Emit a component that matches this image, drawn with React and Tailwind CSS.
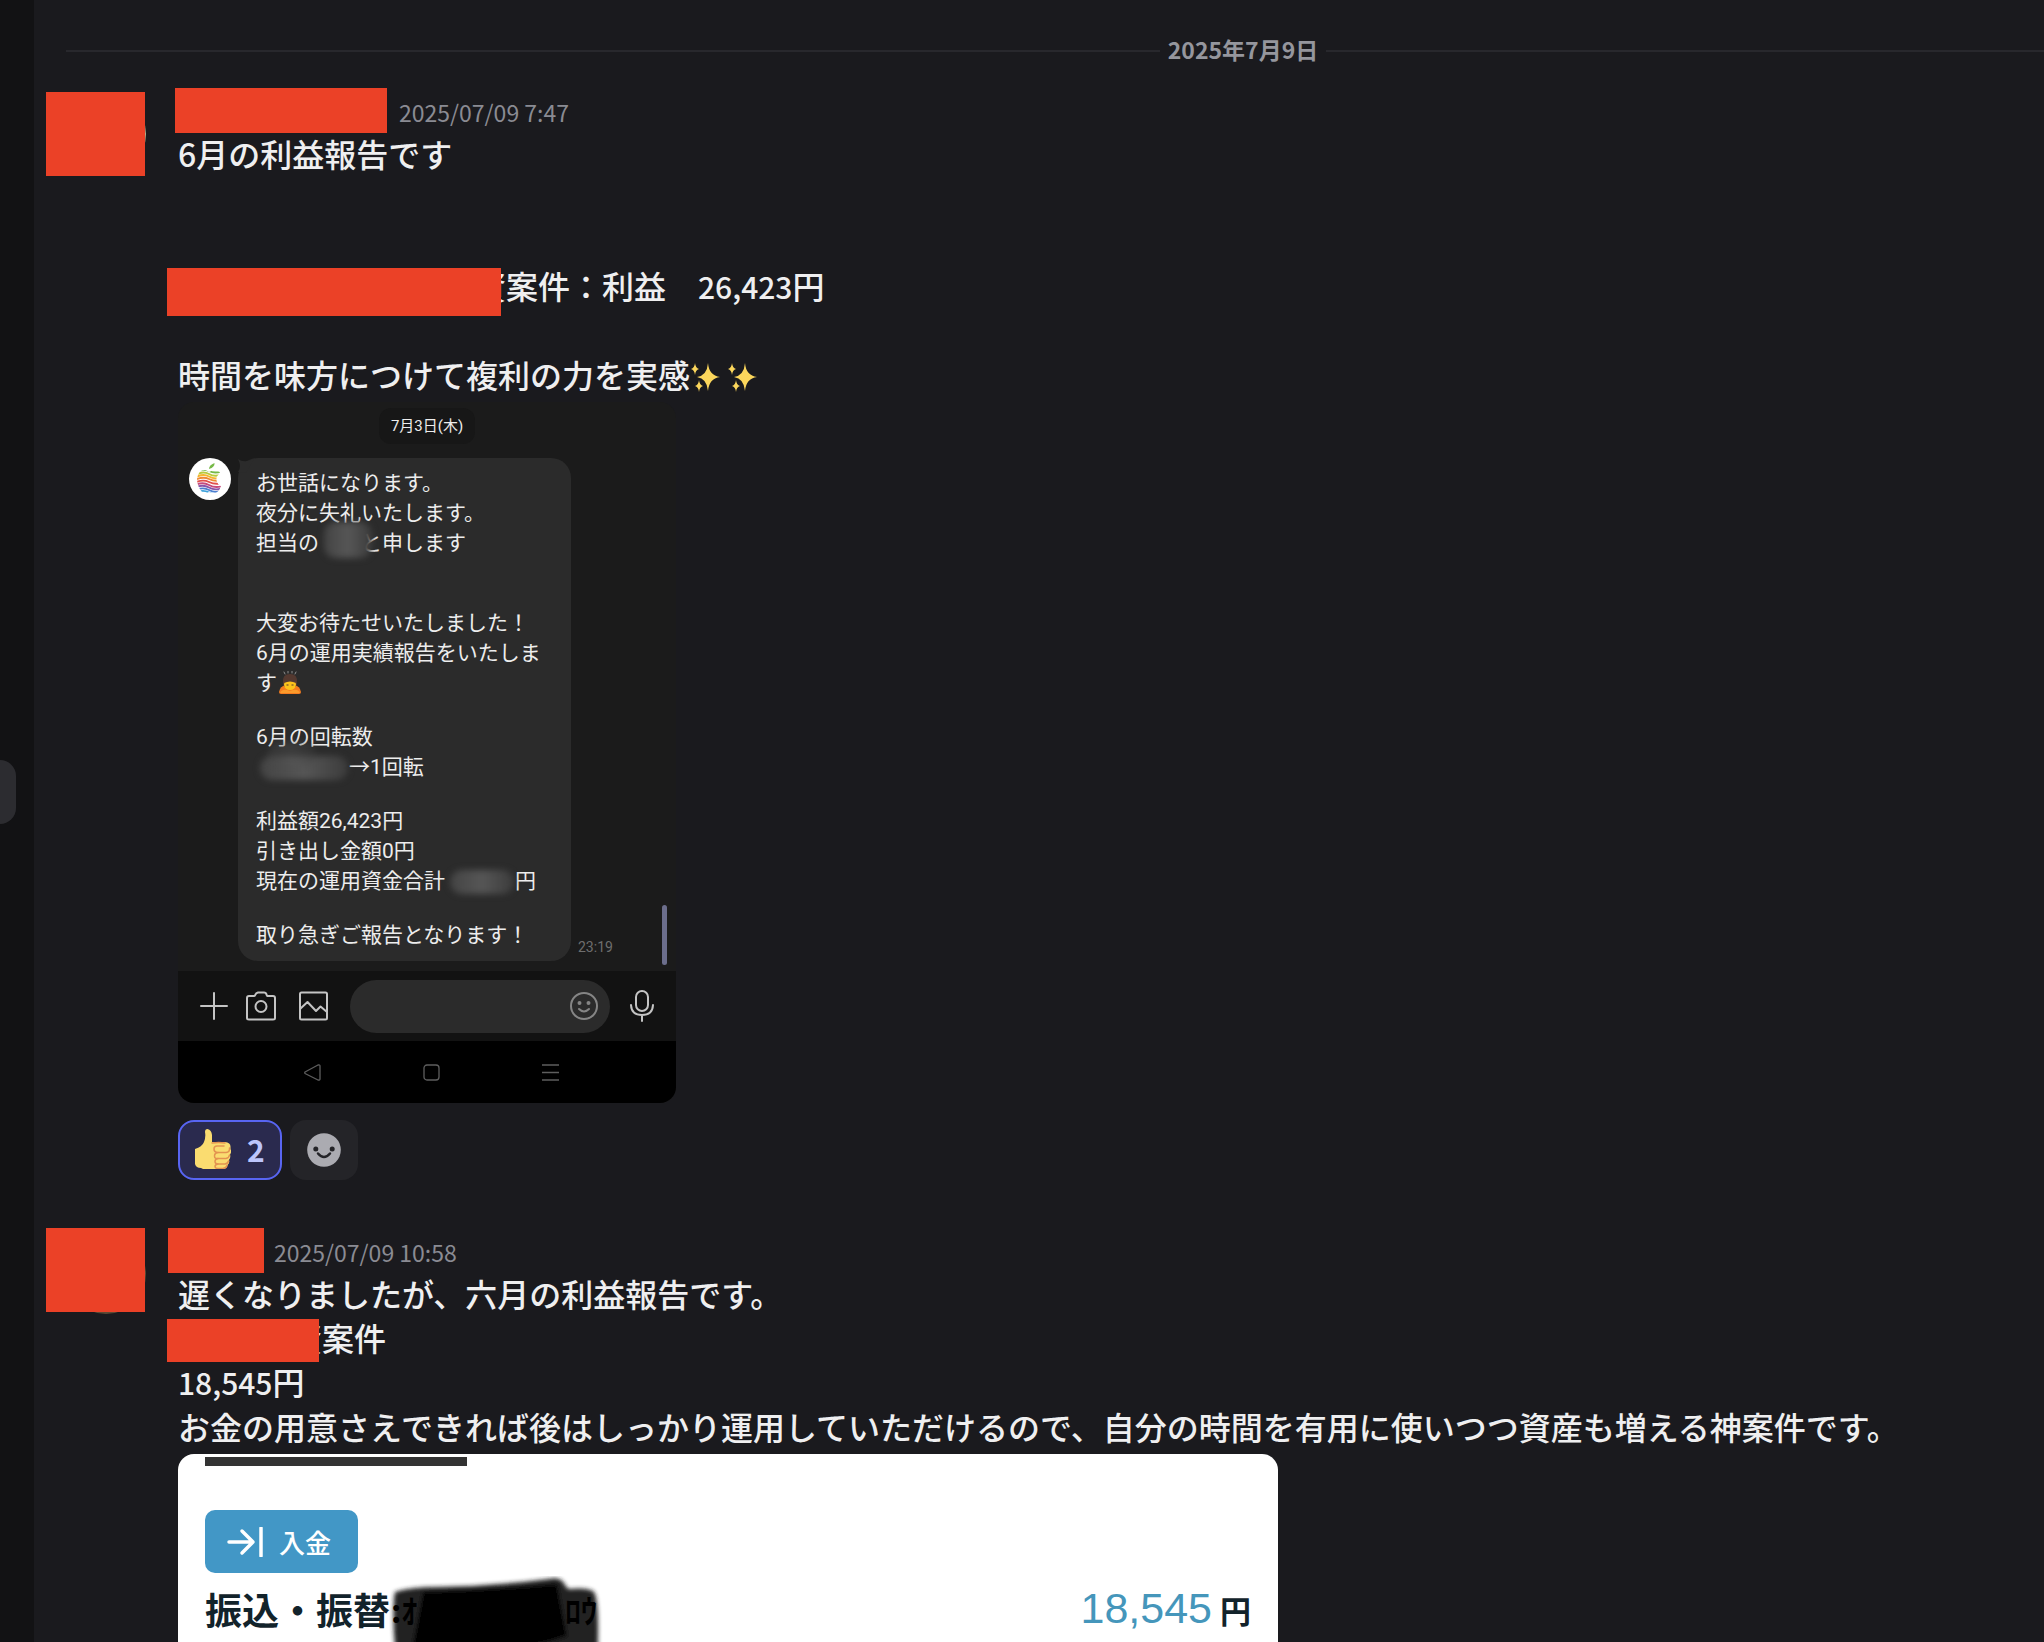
import { clsx } from "clsx";

// Solid block that hides a name or an avatar
function Redaction({ className }) {
  return <span aria-hidden="true" className={clsx("absolute bg-[#eb4127]", className)} />;
}

function Sparkles() {
  return (
    <svg width="30" height="32" viewBox="0 0 30 32" className="inline-block align-[-5px]">
      <g fill="#fbd65c">
        <path d="M18 2Q19 14.500 30 16Q19 17.500 18 30Q17 17.500 7 16Q17 14.500 18 2Z" />
        <path d="M5 2Q5.500 7 9 8Q5.500 9 5 14Q4.500 9 1 8Q4.500 7 5 2Z" />
        <path d="M9 19Q9.500 24 13 25Q9.500 26 9 31Q8.500 26 5 25Q8.500 24 9 19Z" />
      </g>
    </svg>
  );
}

function Bowing() {
  return (
    <svg width="22" height="24" viewBox="0 0 22 24" className="ml-0.5 inline-block align-[-5px]">
      <g stroke="#8d8d8d" strokeWidth="1" strokeLinecap="round">
        <path d="M5 1l1 2M9 0v2M13 0v2M17 1l-1 2" />
      </g>
      <path d="M0 21Q1 15 7 14h8q6 1 7 7 0 2-2 2H2q-2 0-2-2Z" fill="#f57c1f" />
      <path d="M4 12Q3 3 11 3t7 9q0 4-3 4H7q-3 0-3-4Z" fill="#543930" />
      <ellipse cx="11" cy="13.500" rx="6" ry="5.500" fill="#fcc21b" />
      <path d="M5 12Q11 9 17 12L16 7H6Z" fill="#543930" />
      <path d="M1 22q2-4 7-3l3 1 3-1q5-1 7 3Z" fill="#fb9b2b" />
      <path d="M7.500 14h2M12.500 14h2" stroke="#543930" strokeWidth="1.200" />
    </svg>
  );
}

function ThumbsUp() {
  return (
    <svg width="36" height="40" viewBox="0 0 36 40">
      <path
        d="M10 3Q10 0 12.500 0Q16.500 1 17 6V13H30Q35.500 13.500 35.500 17.500V20Q37 23 35 25.500Q36 28.500 34 31Q35 34 32.500 36Q32 40 28 40H8L6 39Q1 39 0 35V20Q7 18 9 13Q11 8 10 3Z"
        fill="#fadc70"
      />
      <g fill="none" stroke="#e39350" strokeWidth="1.500" strokeLinecap="round">
        <path d="M17 14Q24 13 30 14" />
        <path d="M29 17H22Q19 17 19 20T22 23.500H31Q35 23 34.500 19" />
        <path d="M23 23.500Q19.500 24 19.500 27T23 29.500H31Q34 29 34.500 26" />
        <path d="M23 29.500Q20 30 20 32.500T23 35H30Q33 34.500 33.500 32" />
        <path d="M23 35Q20 35.500 20 37.500T23 39.500H28Q31.500 39 32 36.500" />
      </g>
    </svg>
  );
}

function AppleAvatar() {
  return (
    <svg width="42" height="42" viewBox="0 0 42 42">
      <defs>
        <clipPath id="apple">
          <path d="M20 14Q25 11 29 13Q31 14 31 15Q26 19 28 24Q29 27 32 28Q30 34 26 35Q23 35 20 34Q16 36 13 34Q8 28 8 21Q9 12 16 12Q18 12.500 20 14Z" />
        </clipPath>
      </defs>
      <circle cx="21" cy="21" r="21" fill="#fff" />
      <path d="M20 11Q20 7 25.500 5Q26 9 20 11Z" fill="#76b947" />
      <g clipPath="url(#apple)" fill="none" strokeWidth="1.900">
        <path d="M6 14Q14 10 20 13T34 13" stroke="#76b947" />
        <path d="M6 17Q14 12.500 20 16T34 16" stroke="#b9ca3c" />
        <path d="M6 19.500Q14 15 20 18.500T34 19" stroke="#f5b52e" />
        <path d="M6 22Q14 18 20 21T34 22" stroke="#ef8a33" />
        <path d="M6 24.500Q14 21 20 24T34 25" stroke="#e2504c" />
        <path d="M6 27Q14 23.500 20 27T34 28" stroke="#c64b7d" />
        <path d="M6 29.500Q14 26 20 29.500T34 30" stroke="#8a55a8" />
        <path d="M6 32.500Q14 28.500 20 32T34 32.500" stroke="#4b7fd0" />
        <path d="M6 35Q14 31 20 34.500T34 35" stroke="#3fa3dc" />
      </g>
    </svg>
  );
}

function Smudge({ className }) {
  return (
    <span
      aria-hidden="true"
      className={clsx("absolute rounded-[12px] bg-linear-to-r from-[#444] via-[#565656] to-[#3c3c3c] blur-[3px]", className)}
    />
  );
}

const icon = {
  fill: "none",
  stroke: "#c4c4c4",
  strokeWidth: 2,
  strokeLinecap: "round",
  strokeLinejoin: "round",
};

function ChatToolbar() {
  return (
    <div className="flex h-[70px] items-center bg-[#121212] pl-[22px]">
      <button aria-label="追加" className="mr-[18px]">
        <svg width="28" height="28" viewBox="0 0 28 28" {...icon}>
          <path d="M14 1v26M1 14h26" />
        </svg>
      </button>
      <button aria-label="カメラ" className="mr-[23px]">
        <svg width="30" height="30" viewBox="0 0 30 30" {...icon}>
          <path d="M1 7Q1 5 3 5H8Q9 5 9.500 3.500T12 1.500H18Q20 1.500 20.500 3.500T22 5H27Q29 5 29 7V27Q29 28.500 27 28.500H3Q1 28.500 1 27Z" />
          <circle cx="15" cy="15.500" r="5.500" />
        </svg>
      </button>
      <button aria-label="写真" className="mr-[22px]">
        <svg width="29" height="30" viewBox="0 0 29 30" {...icon}>
          <rect x="1" y="1.500" width="27" height="27" rx="1.500" />
          <path d="M1 18L8.500 11L17 20L21.500 15.500L28 21" />
        </svg>
      </button>
      <div className="relative mr-5 w-[260px]">
        <input aria-label="メッセージ" className="block h-[53px] w-full rounded-full bg-[#2b2b2b] px-6 text-white outline-none" />
        <button aria-label="スタンプ" className="absolute top-3 right-3">
          <svg width="28" height="28" viewBox="0 0 28 28" {...icon} stroke="#858585">
            <circle cx="14" cy="14" r="13" />
            <path d="M9 17Q14 22 19 17" />
            <circle cx="9.500" cy="11" r="1" fill="#858585" />
            <circle cx="18.500" cy="11" r="1" fill="#858585" />
          </svg>
        </button>
      </div>
      <button aria-label="音声">
        <svg width="24" height="32" viewBox="0 0 24 32" {...icon}>
          <rect x="6" y="1" width="12" height="20" rx="6" />
          <path d="M1 15Q1.500 25 12 25T23 15M12 25v6" />
        </svg>
      </button>
    </div>
  );
}

function ChatShot() {
  return (
    <div className="relative w-[498px] overflow-hidden rounded-2xl bg-[#1b1b1b] font-['Roboto','Noto_Sans_CJK_JP',sans-serif] text-[#ededed]">
      <div className="flex h-[56px] justify-center pt-1.5">
        <span className="h-9 rounded-xl bg-[#171717] px-3 text-[15px] leading-9">7月3日(木)</span>
      </div>

      <div className="flex items-end pb-2.5 pl-[11px]">
        <div className="mr-[7px] self-start">
          <AppleAvatar />
        </div>
        <div className="relative w-[333px] rounded-[20px] bg-[#2b2b2b] pt-2.5 pb-[11px] pl-[18px] text-[21px] leading-[30px] whitespace-nowrap">
          <svg width="20" height="16" viewBox="0 0 20 16" className="absolute top-0 left-0">
            <path d="M0 1Q4 4 9 3L16 1L8 15L0 14Q4 9 0 1Z" fill="#2b2b2b" />
          </svg>
          <p>お世話になります。</p>
          <p>夜分に失礼いたします。</p>
          <p className="relative">
            担当の<span className="inline-block w-[42px]" />と申します
            <Smudge className="top-[-6px] left-[68px] h-9 w-[48px]" />
          </p>
          <p className="mt-[50px]">大変お待たせいたしました！</p>
          <p>6月の運用実績報告をいたしま</p>
          <p>
            す<Bowing />
          </p>
          <p className="mt-6">6月の回転数</p>
          <p className="relative">
            <span className="inline-block w-[93px]" />→1回転
            <Smudge className="top-1 left-1 h-6 w-[88px]" />
            <Smudge className="-top-2.5 left-3 h-6 w-12 opacity-40" />
          </p>
          <p className="mt-6">利益額26,423円</p>
          <p>引き出し金額0円</p>
          <p className="relative">
            現在の運用資金合計<span className="inline-block w-[70px]" />円
            <Smudge className="top-1 left-[194px] h-6 w-[64px]" />
          </p>
          <p className="mt-6">取り急ぎご報告となります！</p>
        </div>
        <time className="ml-[7px] text-[14px] leading-7 text-[#6e6e6e]">23:19</time>
        <span className="absolute top-[503px] right-[9px] h-[60px] w-[5px] rounded-full bg-[#6c6e8c]" />
      </div>

      <ChatToolbar />

      <div className="flex h-[62px] items-center justify-center gap-[102px] bg-black pl-2">
        <svg width="17" height="17" viewBox="0 0 17 17" {...icon} stroke="#5e5e5e" strokeWidth="1.300">
          <path d="M1 8L14 1Q16 0.500 16 2V15Q16 16.500 14 16L1 9.500Q0.500 8.500 1 8Z" />
        </svg>
        <svg width="17" height="17" viewBox="0 0 17 17" {...icon} stroke="#5e5e5e" strokeWidth="1.300">
          <rect x="1" y="1" width="15" height="15" rx="3" />
        </svg>
        <svg width="17" height="17" viewBox="0 0 17 17" {...icon} stroke="#5e5e5e" strokeWidth="1.300">
          <path d="M0 1h17M0 8.500h17M0 16h17" />
        </svg>
      </div>
    </div>
  );
}

function DepositShot() {
  return (
    <div className="w-[1100px] rounded-2xl bg-white px-[27px] pt-[3px] pb-16 text-[#12232b]">
      <div className="h-[9px] w-[262px] bg-[#333]" />
      <span className="mt-11 flex h-[63px] w-[153px] items-center rounded-[10px] bg-[#4297c6] pl-[22px] text-[26px] leading-[60px] font-medium text-white">
        <svg width="36" height="30" viewBox="0 0 36 30" fill="none" stroke="#fff" strokeWidth="3.500" strokeLinecap="round" strokeLinejoin="round" className="mr-4">
          <path d="M2 15H26M15 4L26 15L15 26" />
          <path d="M34 1V29" strokeWidth="3.500" />
        </svg>
        入金
      </span>
      <div className="mt-2.5 flex items-center justify-between leading-[50px]">
        <div className="relative text-[37px] font-bold whitespace-nowrap">
          振込・振替
          <svg width="216" height="90" viewBox="0 0 216 90" className="absolute top-[-8px] left-[184px]">
            <defs>
              <filter id="soft">
                <feGaussianBlur stdDeviation="2" />
              </filter>
            </defs>
            <g filter="url(#soft)">
              <path d="M6 16Q22 11 48 11Q105 10 160 3Q172 0 176 9L179 13Q200 11 205 16Q211 26 208 90H8Q3 50 5 22Z" fill="#222" />
              <path d="M34 16Q100 14 168 8L178 60Q150 70 120 72L40 90H20Z" fill="#000" />
            </g>
          </svg>
          <span className="absolute top-0 left-[186px] text-[32px] text-black">:ｵ</span>
          <span className="absolute top-0 left-[360px] text-[32px] text-black">ﾛｳ</span>
        </div>
        <div className="flex items-baseline gap-2">
          <span className="font-['Liberation_Sans',sans-serif] text-[43px] text-[#4596bb]">18,545</span>
          <span className="text-[31px] font-bold">円</span>
        </div>
      </div>
    </div>
  );
}

function Message({ time, avatar, cover, nameWidth, nameCover, children }) {
  return (
    <article className="flex gap-8 pl-8">
      <div className="relative h-20 w-20 shrink-0">
        <div className={clsx("h-20 w-20 rounded-full", avatar)} />
        <Redaction className={cover} />
      </div>
      <div className="min-w-0 flex-1">
        <header className="flex h-[37px] items-center gap-3">
          <span className={clsx("relative h-full", nameWidth)}>
            <Redaction className={nameCover} />
          </span>
          <time className="text-[23px] leading-[37px] text-[#8a8b93]">{time}</time>
        </header>
        {children}
      </div>
    </article>
  );
}

export default function App() {
  return (
    <div className="flex h-screen overflow-hidden bg-[#1a1a1e] font-['Noto_Sans_CJK_JP',sans-serif]">
      {/* Server rail */}
      <aside className="w-[34px] shrink-0 bg-[#121214] pt-[760px]">
        <div className="h-16 w-4 rounded-r-2xl bg-[#2c2c30]" />
      </aside>

      <main className="min-w-0 flex-1 overflow-hidden text-[#efeff0]">
        {/* Date divider, runs on past the right edge */}
        <div className="-mr-[376px] mb-[25px] ml-8 flex items-center gap-2 pt-[33px] text-[23px] leading-8 font-bold text-[#95969d]">
          <span className="h-0.5 flex-1 bg-[#28282d]" />
          <time className="pb-1">2025年7月9日</time>
          <span className="h-0.5 flex-1 bg-[#28282d]" />
        </div>

        <Message
          time="2025/07/09 7:47"
          avatar="bg-[#b9b48f]"
          cover="-top-0.5 -left-5 h-[84px] w-[99px]"
          nameWidth="w-[209px]"
          nameCover="-top-1.5 -left-[3px] h-[45px] w-[212px]"
        >
          <div className="text-[32px] leading-[44px] font-medium whitespace-nowrap">
            <p>6月の利益報告です</p>
            <p className="relative mt-[88px] pl-[296px]">
              資案件：利益　<span className="text-[30px]">26,423</span>円
              <Redaction className="top-[5px] -left-[11px] h-12 w-[334px]" />
            </p>
            <p className="mt-11">
              時間を味方につけて複利の力を実感
              <Sparkles /> <Sparkles />
            </p>
          </div>
          <div className="mt-1.5">
            <ChatShot />
          </div>
          <div className="mt-[17px] mb-[54px] flex gap-2">
            <button className="flex h-[60px] w-[104px] items-center gap-4 rounded-2xl border-2 border-[#5865f2] bg-[#2a2a4e] pb-0.5 pl-[15px] text-[30px] font-bold text-[#bcc5fb]">
              <ThumbsUp />2
            </button>
            <button aria-label="リアクションを付ける" className="flex h-[60px] w-[68px] items-center justify-center rounded-2xl bg-[#242428]">
              <svg width="34" height="34" viewBox="0 0 34 34">
                <circle cx="17" cy="17" r="16.800" fill="#ababb1" />
                <circle cx="8.800" cy="16" r="2.500" fill="#242428" />
                <circle cx="25.200" cy="16" r="2.500" fill="#242428" />
                <path d="M11 20.500Q17 27.500 23 20.500" fill="none" stroke="#242428" strokeWidth="2.500" strokeLinecap="round" />
              </svg>
            </button>
          </div>
        </Message>

        <Message
          time="2025/07/09 10:58"
          avatar="bg-[#5c4a35]"
          cover="-top-1.5 -left-5 h-[84px] w-[99px]"
          nameWidth="w-[84px]"
          nameCover="-top-1.5 -left-2.5 h-[45px] w-24"
        >
          <div className="text-[32px] leading-[44px] font-medium whitespace-nowrap">
            <p>遅くなりましたが、六月の利益報告です。</p>
            <p className="relative pl-[112px]">
              資案件
              <Redaction className="top-1 -left-[11px] h-[43px] w-[152px]" />
            </p>
            <p>
              <span className="text-[30px]">18,545</span>円
            </p>
            <p>お金の用意さえできれば後はしっかり運用していただけるので、自分の時間を有用に使いつつ資産も増える神案件です。</p>
          </div>
          <div className="mt-1.5">
            <DepositShot />
          </div>
        </Message>
      </main>
    </div>
  );
}
